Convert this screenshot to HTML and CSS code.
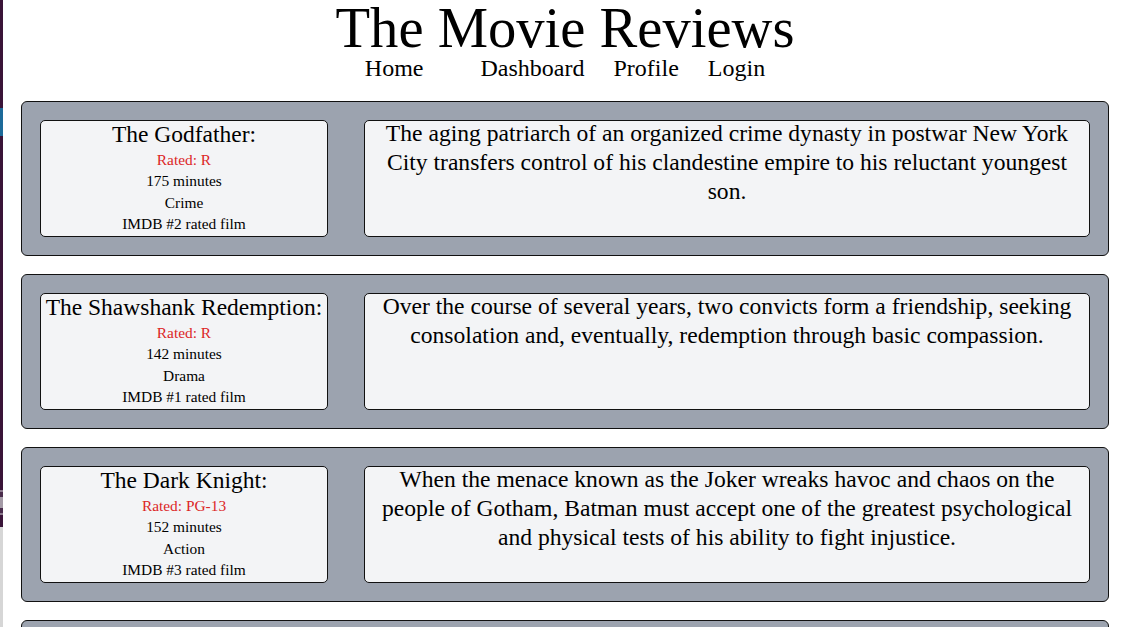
FILE: index.html
```html
<!DOCTYPE html>
<html lang="en">
<head>
<meta charset="utf-8">
<title>The Movie Reviews</title>
<link rel="stylesheet" href="styles.css">
</head>
<body>
<div class="edge"></div>
<div class="page">
  <header class="header">
    <h1 class="title">The Movie Reviews</h1>
    <nav class="nav">
      <a class="nav-link nav-home" href="#">Home</a>
      <a class="nav-link" href="#">Dashboard</a>
      <a class="nav-link" href="#">Profile</a>
      <a class="nav-link" href="#">Login</a>
    </nav>
  </header>
  <main class="list">
    <section class="card">
      <div class="info">
        <div class="movie-title">The Godfather:</div>
        <div class="line rated">Rated: R</div>
        <div class="line">175 minutes</div>
        <div class="line">Crime</div>
        <div class="line">IMDB #2 rated film</div>
      </div>
      <div class="desc"><p class="desc-text">The aging patriarch of an organized crime dynasty in postwar New York City transfers control of his clandestine empire to his reluctant youngest son.</p></div>
    </section>
    <section class="card">
      <div class="info">
        <div class="movie-title">The Shawshank Redemption:</div>
        <div class="line rated">Rated: R</div>
        <div class="line">142 minutes</div>
        <div class="line">Drama</div>
        <div class="line">IMDB #1 rated film</div>
      </div>
      <div class="desc"><p class="desc-text">Over the course of several years, two convicts form a friendship, seeking consolation and, eventually, redemption through basic compassion.</p></div>
    </section>
    <section class="card">
      <div class="info">
        <div class="movie-title">The Dark Knight:</div>
        <div class="line rated">Rated: PG-13</div>
        <div class="line">152 minutes</div>
        <div class="line">Action</div>
        <div class="line">IMDB #3 rated film</div>
      </div>
      <div class="desc"><p class="desc-text">When the menace known as the Joker wreaks havoc and chaos on the people of Gotham, Batman must accept one of the greatest psychological and physical tests of his ability to fight injustice.</p></div>
    </section>
    <section class="card">
      <div class="info">
        <div class="movie-title">The Godfather Part II:</div>
        <div class="line rated">Rated: R</div>
        <div class="line">202 minutes</div>
        <div class="line">Crime</div>
        <div class="line">IMDB #4 rated film</div>
      </div>
      <div class="desc"><p class="desc-text">The early life and career of Vito Corleone in 1920s New York City is portrayed, while his son, Michael, expands and tightens his grip on the family crime syndicate.</p></div>
    </section>
  </main>
</div>
</body>
</html>
```

FILE: styles.css
```css
html, body {
  margin: 0;
  padding: 0;
  background: #ffffff;
  color: #000000;
  font-family: "Liberation Serif", "Times New Roman", serif;
}

.edge {
  position: fixed;
  left: 0;
  top: 0;
  width: 3px;
  height: 100%;
  background: linear-gradient(to bottom,
    #3a1438 0px, #3a1438 108px,
    #1d6a99 108px, #1d6a99 136px,
    #3a1438 136px, #3a1438 490px,
    #8c7a8e 490px, #8c7a8e 492px,
    #4a2c4c 492px, #4a2c4c 497px,
    #a49aa6 497px, #a49aa6 508px,
    #4a2c4c 508px, #4a2c4c 513px,
    #8c7a8e 513px, #8c7a8e 515px,
    #3a1438 515px, #3a1438 527px,
    #d6d6d6 527px, #d6d6d6 100%);
}

.page {
  margin: 0 16px 0 21px;
}

.header {
  display: flex;
  flex-direction: column;
  align-items: center;
}

.title {
  margin: 0;
  font-size: 56.6px;
  font-weight: normal;
  line-height: 56px;
}

.nav {
  display: flex;
  gap: 29px;
  font-size: 24px;
  line-height: 24px;
}

.nav-link {
  color: #000000;
  text-decoration: none;
}

.nav-home {
  margin-right: 28px;
}

.list {
  display: flex;
  flex-direction: column;
  gap: 18px;
  margin-top: 21px;
}

.card {
  display: flex;
  gap: 36px;
  padding: 18px;
  background: #9ca3af;
  border: 1px solid #111111;
  border-radius: 6px;
}

.info {
  width: 286px;
  flex: none;
  background: #f3f4f6;
  border: 1px solid #111111;
  border-radius: 5px;
  text-align: center;
  padding-bottom: 2px;
}

.movie-title {
  font-size: 23.5px;
  line-height: 28px;
  margin-top: -1px;
  margin-bottom: 1px;
}

.line {
  font-size: 15.4px;
  line-height: 21.25px;
}

.rated {
  color: #dc2626;
}

.desc {
  flex: 1;
  background: #f3f4f6;
  border: 1px solid #111111;
  border-radius: 5px;
  text-align: center;
  padding: 0 6px;
}

.desc-text {
  margin: -2px 0 0 0;
  font-size: 23.6px;
  line-height: 29px;
}
```
